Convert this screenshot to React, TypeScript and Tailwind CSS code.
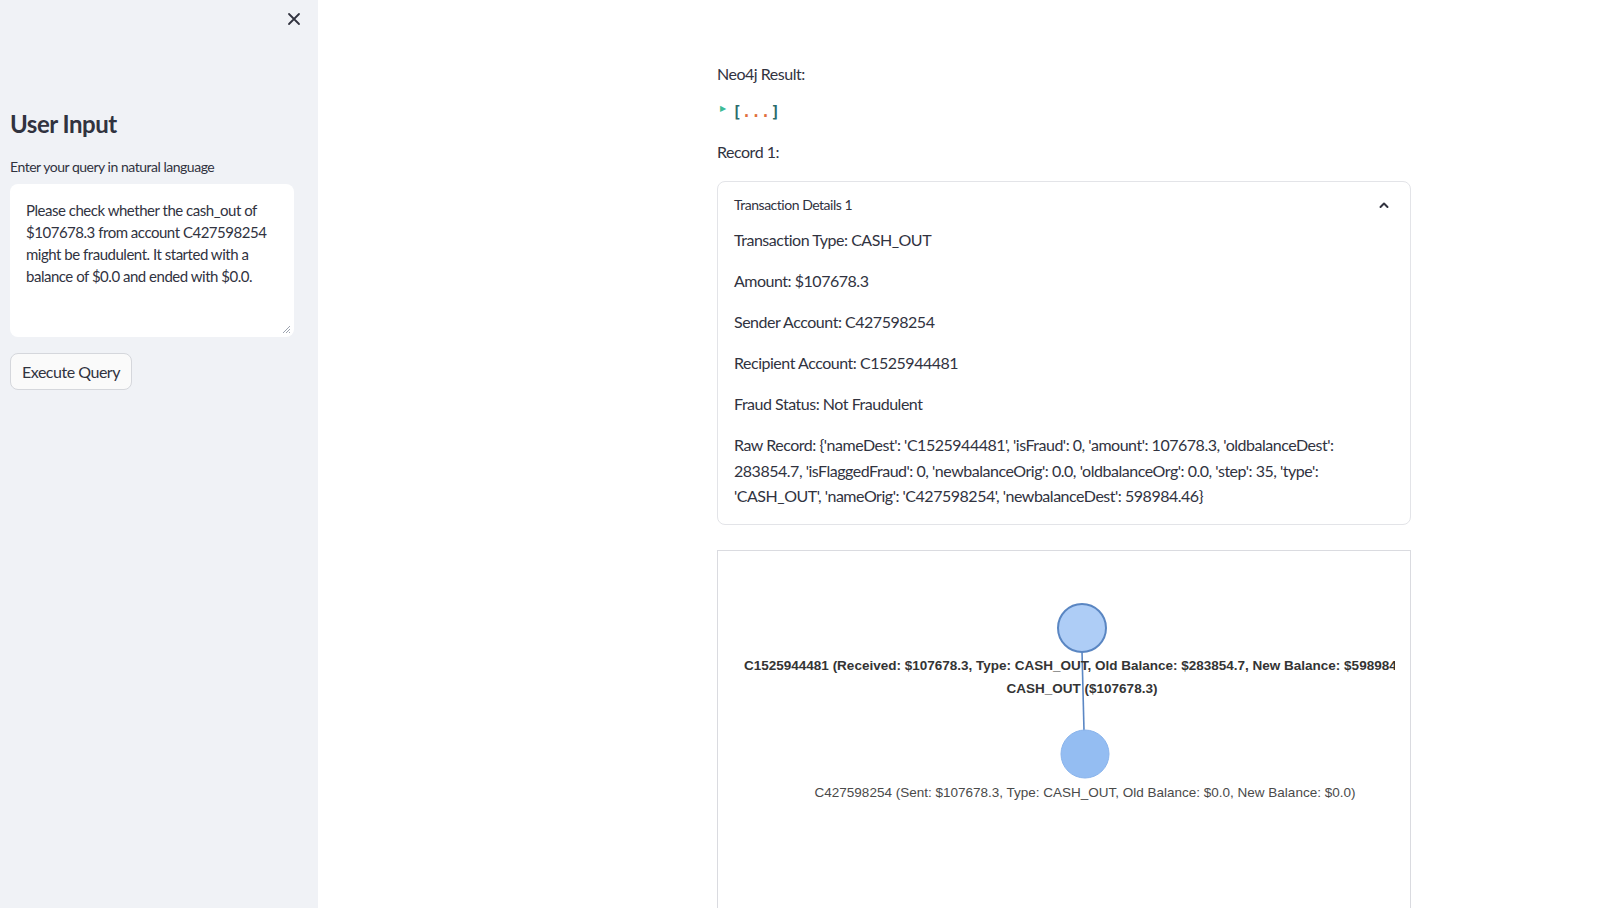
import React from "react";

const FONT = { fontFamily: "Lato, 'Open Sans', sans-serif", letterSpacing: "-0.03em" };

function CloseIcon() {
  return (
    <svg width="14" height="14" viewBox="0 0 14 14" fill="none">
      <path d="M2 2L12 12M12 2L2 12" stroke="#31333f" strokeWidth="1.8" strokeLinecap="round" />
    </svg>
  );
}

function ChevronUp() {
  return (
    <svg width="12" height="10" viewBox="0 0 12 10" fill="none">
      <path d="M2.5 7L6 3.5L9.5 7" stroke="#31333f" strokeWidth="2" strokeLinecap="round" strokeLinejoin="round" />
    </svg>
  );
}

function ResizeHandle() {
  return (
    <svg width="9" height="9" viewBox="0 0 9 9" className="absolute right-[3px] bottom-[3px]">
      <path d="M8 1L1 8M8 4L4 8M8 7L7 8" stroke="#9ca3af" strokeWidth="1" />
    </svg>
  );
}

function Graph() {
  return (
    <svg width="692" height="358" viewBox="0 0 692 358" className="block" style={{ letterSpacing: "normal" }}>
      <defs>
        <clipPath id="gclip">
          <rect x="0" y="0" width="677" height="358" />
        </clipPath>
      </defs>
      <line x1="364" y1="100" x2="366" y2="180" stroke="#5b87c4" strokeWidth="1.6" />
      <circle cx="364" cy="77" r="24" fill="#aecdf6" stroke="#5a86c2" strokeWidth="2" />
      <circle cx="367" cy="203" r="24" fill="#94bdf2" stroke="#8ab4ec" strokeWidth="1" />
      <g clipPath="url(#gclip)" style={{ fontFamily: "'Liberation Sans', Arial, sans-serif" }}>
        <text x="364" y="119" textAnchor="middle" fontSize="13.5" fontWeight="700" fill="#343434">
          C1525944481 (Received: $107678.3, Type: CASH_OUT, Old Balance: $283854.7, New Balance: $598984.46)
        </text>
        <text x="364" y="142" textAnchor="middle" fontSize="13.5" fontWeight="700" fill="#343434">
          CASH_OUT ($107678.3)
        </text>
        <text x="367" y="246" textAnchor="middle" fontSize="13.5" fill="#4a4a4a">
          C427598254 (Sent: $107678.3, Type: CASH_OUT, Old Balance: $0.0, New Balance: $0.0)
        </text>
      </g>
    </svg>
  );
}

export default function App() {
  const details = [
    "Transaction Type: CASH_OUT",
    "Amount: $107678.3",
    "Sender Account: C427598254",
    "Recipient Account: C1525944481",
    "Fraud Status: Not Fraudulent",
  ];
  return (
    <div className="flex w-[1600px] h-[908px] overflow-hidden bg-white text-[#31333f]" style={FONT}>
      <aside className="w-[318px] shrink-0 h-full bg-[#f0f2f6] pl-[10px] pr-[24px] flex flex-col">
        <div className="h-[38px] flex items-center justify-end">
          <div className="mr-[-7px]">
            <CloseIcon />
          </div>
        </div>
        <h2 className="mt-[70px] text-[24px] leading-[32px] font-bold text-[#31333f]">User Input</h2>
        <label className="mt-[18px] text-[14px] leading-[18px] text-[#31333f]">Enter your query in natural language</label>
        <div className="relative mt-[8px] h-[153px] bg-white rounded-[8px] pl-[16px] pr-[10px] pt-[15px]">
          <p className="text-[15px] leading-[22px] text-[#31333f]">
            Please check whether the cash_out of $107678.3 from account C427598254 might be fraudulent. It started with a balance of $0.0 and ended with $0.0.
          </p>
          <ResizeHandle />
        </div>
        <div className="mt-[16px]">
          <button className="h-[37px] px-[11px] bg-[#fafafa] border border-[#d5d7dc] rounded-[8px] text-[16px] text-[#31333f]">
            Execute Query
          </button>
        </div>
      </aside>
      <main className="flex-1 h-full">
        <div className="ml-[399px] w-[694px] pt-[61px]">
          <p className="text-[16px] leading-[25px]">Neo4j Result:</p>
          <div className="mt-[14px] flex items-center gap-[7px] h-[25px]">
            <span className="text-[#3dbb95] text-[8px] leading-none -mt-[9px] ml-[3px]">&#9654;</span>
            <span className="text-[15px] font-bold tracking-[0.5px]" style={{ fontFamily: "'DejaVu Sans Mono', monospace" }}>
              <span className="text-[#2b6b6b]">[</span>
              <span className="text-[#e0703c]">...</span>
              <span className="text-[#2b6b6b]">]</span>
            </span>
          </div>
          <p className="mt-[14px] text-[16px] leading-[25px]">Record 1:</p>
          <section className="mt-[17px] border border-[#e3e4e8] rounded-[8px]">
            <div className="h-[45px] flex items-center justify-between px-[16px]">
              <span className="text-[14px] text-[#31333f]">Transaction Details 1</span>
              <span className="mr-[4px]">
                <ChevronUp />
              </span>
            </div>
            <div className="px-[16px] pb-[15px] flex flex-col gap-[15.5px]">
              {details.map((d) => (
                <p key={d} className="text-[16px] leading-[25.6px]">{d}</p>
              ))}
              <p className="text-[16px] leading-[25.5px]">
                Raw Record: {"{"}'nameDest': 'C1525944481', 'isFraud': 0, 'amount': 107678.3, 'oldbalanceDest': 283854.7, 'isFlaggedFraud': 0, 'newbalanceOrig': 0.0, 'oldbalanceOrg': 0.0, 'step': 35, 'type': 'CASH_OUT', 'nameOrig': 'C427598254', 'newbalanceDest': 598984.46{"}"}
              </p>
            </div>
          </section>
          <section className="mt-[25px] border border-[#dadbe0] h-[400px]">
            <Graph />
          </section>
        </div>
      </main>
    </div>
  );
}
